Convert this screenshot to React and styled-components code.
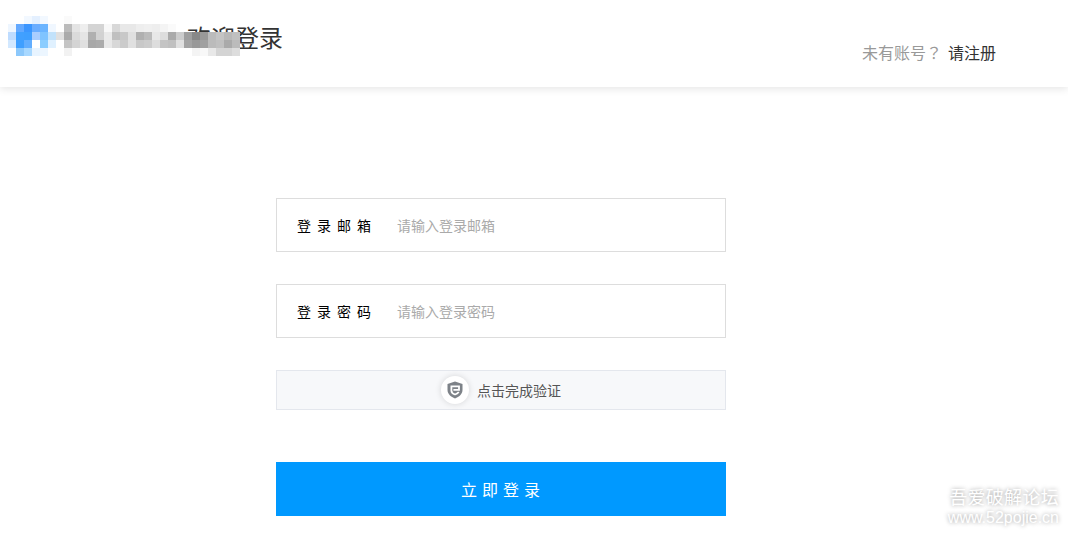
import React from 'react';
import styled, { createGlobalStyle } from 'styled-components';

const Global = createGlobalStyle`
  html, body { margin: 0; padding: 0; background: #fff; }
  body { font-family: "Noto Sans CJK SC", "Liberation Sans", sans-serif; overflow: hidden; }
`

const Page = styled.div`
  position: relative;
  width: 1068px;
  height: 534px;
  overflow: hidden;
`

const Header = styled.header`
  height: 87px;
  display: flex;
  justify-content: space-between;
  box-shadow: 0 2px 8px rgba(0,0,0,.1);
`

const Brand = styled.div`
  position: relative;
  padding: 19px 0 0 187px;
`

const Title = styled.h1`
  margin: 0;
  font-size: 24px;
  line-height: 36px;
  font-weight: 400;
  color: #333;
`

const Mosaic = styled.svg`
  position: absolute;
  left: 0;
  top: 0;
`

const Account = styled.div`
  padding: 41px 72px 0 0;
  font-size: 16px;
  line-height: 22px;
  color: #999;
`

const QuestionMark = styled.span`
  font-family: "Noto Sans CJK TC", sans-serif;
`

const RegisterLink = styled.a`
  color: #333;
  margin-left: 6px;
`

const Form = styled.form`
  width: 450px;
  margin: 111px 0 0 276px;
  display: flex;
  flex-direction: column;
`

const Field = styled.label`
  height: 54px;
  box-sizing: border-box;
  border: 1px solid #ddd;
  display: flex;
  align-items: center;
  padding-left: 20px;
  margin-bottom: 32px;
`

const FieldLabel = styled.span`
  width: 100px;
  font-size: 14px;
  letter-spacing: 6px;
  color: #000;
`

const Input = styled.input`
  flex: 1;
  border: 0;
  outline: 0;
  padding: 0;
  font: 14px "Noto Sans CJK SC", sans-serif;
  &::placeholder { color: #aaa; opacity: 1; }
`

const Verify = styled.div`
  height: 40px;
  box-sizing: border-box;
  border: 1px solid #e4e7ed;
  background: #f7f8fa;
  display: flex;
  align-items: center;
  justify-content: center;
  font-size: 14px;
  color: #555;
`

const ShieldBadge = styled.span`
  width: 28px;
  height: 28px;
  border-radius: 50%;
  background: #fff;
  box-shadow: 0 0 6px rgba(0,0,0,.14);
  display: flex;
  align-items: center;
  justify-content: center;
  margin-right: 8px;
`

const Submit = styled.button`
  height: 54px;
  margin-top: 52px;
  padding-left: 10px;
  border: 0;
  background: #0099ff;
  color: #fff;
  font: 16px "Noto Sans CJK SC", sans-serif;
  letter-spacing: 5px;
`

const Watermark = styled.div`
  position: absolute;
  right: 9px;
  bottom: 8px;
  color: #fff;
  text-align: right;
  text-shadow: 0 0 4px rgba(0,0,0,.4);
`

const WatermarkName = styled.div`
  font-size: 18px;
  line-height: 26px;
  letter-spacing: .3px;
`

const WatermarkUrl = styled.div`
  font: 16px/17px "Liberation Sans", sans-serif;
`

// blurred-out logo, one row per 8px band starting at x=8, y=16
const blocks = [
  [0, 0, '#f2f8ff', '#e4f0ff', '#f2f8ff', 0, 0, '#fafafa'],
  ['#eef6ff', '#63a9ff', '#3b96ff', '#6aadff', '#6ab4ff', '#f0f7ff', 0, '#bbb', '#e4e4e4', '#eee', '#d4d4d4', '#d4d4d4', '#f8f8f8', '#d8d8d8', '#e8e8e8', '#e8e8e8', '#eee', '#f0f0f0', '#eee', '#f4f4f4', '#fafafa'],
  ['#bedcff', '#41a0ff', '#3f9fff', '#a9cdff', '#7fc4ff', '#c2e2fb', '#e0e0e0', '#aaa', '#dadada', '#e5e5e5', '#b0b0b0', '#d2d2d2', '#eaeaea', '#c0c0c0', '#c8c8c8', '#e0e0e0', '#b0b0b0', '#bbb', '#e8e8e8', '#ddd', '#aaa', '#ccc', '#9f9f9f', '#888', '#999', '#bbb', '#c4c4c4', '#b8b8b8', '#c0c0c0'],
  ['#d2e8ff', '#3f9fff', '#62aeff', '#fff', '#8bcdff', '#e0f1ff', 0, '#c4c4c4', '#d4d4d4', '#e0e0e0', '#a8a8a8', '#ababab', '#e8e8e8', '#d8d8d8', '#cbcbcb', '#e0e0e0', '#c8c8c8', '#ccc', '#ddd', '#c4c4c4', '#c0c0c0', '#e0e0e0', '#a4a4a4', '#999', '#a0a0a0', '#bbb', '#c0c0c0', '#aaa', '#bbb'],
  [0, '#8cc8fb', '#a8d8ff', '#e8f4ff', '#ecf6ff', 0, 0, '#f2f2f2', 0, 0, 0, 0, 0, 0, 0, 0, 0, 0, 0, 0, 0, 0, 0, '#f4f4f4', '#f8f8f8', '#e8e8e8', '#d4d4d4', '#d4d4d4', '#ddd'],
]

const App = () => {
  return (
    <Page>
      <Global />
      <Header>
        <Brand>
          <Title>欢迎登录</Title>
          <Mosaic width="250" height="64" viewBox="0 0 250 64">
            {blocks.map((row, y) =>
              row.map((fill, x) => fill ? (
                <rect key={x + '-' + y} x={8 + x * 8} y={16 + y * 8} width="8" height="8" fill={fill} />
              ) : null)
            )}
          </Mosaic>
        </Brand>
        <Account>
          未有账号<QuestionMark>？</QuestionMark><RegisterLink>请注册</RegisterLink>
        </Account>
      </Header>
      <Form>
        <Field>
          <FieldLabel>登录邮箱</FieldLabel>
          <Input placeholder="请输入登录邮箱" />
        </Field>
        <Field>
          <FieldLabel>登录密码</FieldLabel>
          <Input placeholder="请输入登录密码" />
        </Field>
        <Verify>
          <ShieldBadge>
            <svg width="16" height="18" viewBox="0 0 16 18">
              <path d="M8 0.5 L15.5 3 V9 C15.5 13 12 16 8 17.5 C4 16 0.5 13 0.5 9 V3 Z" fill="#7d8288" />
              <path d="M6.4 8.8 H12 V5.4 H4.4 V9.5 C4.4 11.5 6.2 13 8 13.5 C9.6 13 10.8 12.2 11.8 11" fill="none" stroke="#fff" strokeWidth="1.8" />
            </svg>
          </ShieldBadge>
          点击完成验证
        </Verify>
        <Submit type="button">立即登录</Submit>
      </Form>
      <Watermark>
        <WatermarkName>吾爱破解论坛</WatermarkName>
        <WatermarkUrl>www.52pojie.cn</WatermarkUrl>
      </Watermark>
    </Page>
  )
}

export default App
